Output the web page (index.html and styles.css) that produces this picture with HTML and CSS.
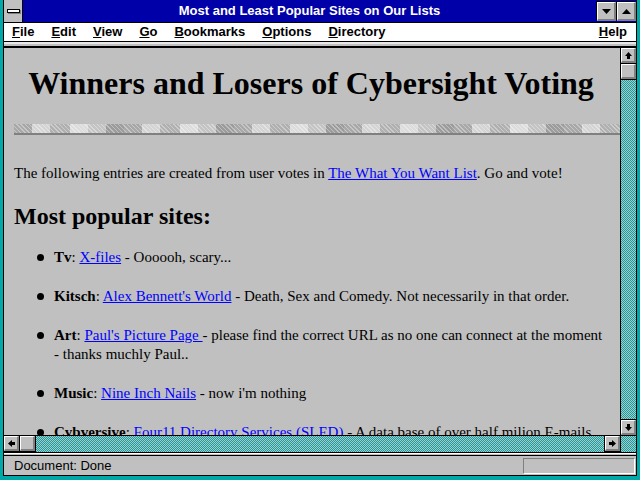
FILE: index.html
```html
<!DOCTYPE html>
<html lang="en">
<head>
  <meta charset="UTF-8">
  <title>Most and Least Popular Sites on Our Lists</title>
  <link rel="stylesheet" href="styles.css">
</head>
<body>
  <div class="window">
    <div class="frame">
      <div class="titlebar">
        <div class="sysmenu"><span class="sysbar"></span></div>
        <div class="caption">Most and Least Popular Sites on Our Lists</div>
        <div class="tbtn">
          <svg width="9" height="5" viewBox="0 0 9 5"><path d="M0 0h9L4.5 5z" fill="#000"/></svg>
        </div>
        <div class="tbtn">
          <svg width="9" height="5" viewBox="0 0 9 5"><path d="M0 5h9L4.5 0z" fill="#000"/></svg>
        </div>
      </div>

      <div class="menubar">
        <span class="mi"><u>F</u>ile</span>
        <span class="mi"><u>E</u>dit</span>
        <span class="mi"><u>V</u>iew</span>
        <span class="mi"><u>G</u>o</span>
        <span class="mi"><u>B</u>ookmarks</span>
        <span class="mi"><u>O</u>ptions</span>
        <span class="mi"><u>D</u>irectory</span>
        <span class="mi help"><u>H</u>elp</span>
      </div>
      <div class="splitter"></div>

      <div class="viewport">
        <div class="page">
          <h1>Winners and Losers of Cybersight Voting</h1>
          <div class="bar"></div>
          <p>The following entries are created from user votes in <a href="#">The What You Want List</a>. Go and vote!</p>
          <h2>Most popular sites:</h2>
          <ul>
            <li><b>Tv</b>: <a href="#">X-files</a> - Oooooh, scary...</li>
            <li><b>Kitsch</b>: <a href="#">Alex Bennett's World</a> - Death, Sex and Comedy. Not necessarily in that order.</li>
            <li><b>Art</b>: <a href="#">Paul's Picture Page </a> - please find the correct URL as no one can connect at the moment - thanks muchly Paul..</li>
            <li><b>Music</b>: <a href="#">Nine Inch Nails</a> - now i'm nothing</li>
            <li><b>Cybversive</b>: <a href="#">Four11 Directory Services (SLED)</a> - A data base of over half milion E-mails addresses</li>
          </ul>
        </div>
        <div class="vscroll">
          <div class="sbtn">
            <svg width="7" height="7" viewBox="0 0 7 7"><path d="M3.5 0L7 4H5v3H2V4H0z" fill="#000"/></svg>
          </div>
          <div class="thumb"></div>
          <div class="track"></div>
          <div class="sbtn">
            <svg width="7" height="7" viewBox="0 0 7 7"><path d="M3.5 7L7 3H5V0H2v3H0z" fill="#000"/></svg>
          </div>
        </div>
      </div>

      <div class="hrow">
        <div class="hscroll">
          <div class="sbtn">
            <svg width="7" height="7" viewBox="0 0 7 7"><path d="M0 3.5L4 0v2h3v3H4v2z" fill="#000"/></svg>
          </div>
          <div class="thumb"></div>
          <div class="track"></div>
          <div class="sbtn">
            <svg width="7" height="7" viewBox="0 0 7 7"><path d="M7 3.5L3 0v2H0v3h3v2z" fill="#000"/></svg>
          </div>
        </div>
        <div class="corner"></div>
      </div>
      <div class="divider"></div>

      <div class="status">
        <span class="msg">Document: Done</span>
        <div class="progress"></div>
      </div>
    </div>
  </div>
</body>
</html>
```

FILE: styles.css
```css
body {
    margin: 0;
}

.window {
    width: 640px;
    height: 480px;
    box-sizing: border-box;
    padding: 0 3px 4px 3px;
    background-color: #00a8a8;
}

.frame {
    height: 100%;
    box-sizing: border-box;
    border-left: 1px solid #000;
    border-right: 1px solid #000;
    border-bottom: 1px solid #000;
    display: flex;
    flex-direction: column;
    background-color: #c0c0c0;
    font-family: "Liberation Sans", Arial, sans-serif;
    font-size: 13px;
}

/* title bar */
.titlebar {
    height: 22px;
    flex: none;
    display: flex;
    border-bottom: 1px solid #000;
    background-color: #0000a8;
}
.sysmenu {
    width: 18px;
    background-color: #c0c0c0;
    border-right: 1px solid #000;
    display: flex;
    align-items: center;
    justify-content: center;
}
.sysbar {
    width: 11px;
    height: 2px;
    background-color: #fff;
    border: 1px solid #000;
    box-shadow: 1px 1px 0 #808080;
}
.caption {
    flex: 1;
    color: #fff;
    font-weight: bold;
    text-align: center;
    line-height: 22px;
}
.tbtn {
    width: 19px;
    height: 19px;
    margin-top: 2px;
    box-sizing: border-box;
    background-color: #c0c0c0;
    border-top: 1px solid #fff;
    border-left: 1px solid #fff;
    border-right: 2px solid #808080;
    border-bottom: 2px solid #808080;
    box-shadow: -1px -1px 0 #000;
    margin-left: 1px;
    display: flex;
    align-items: center;
    justify-content: center;
}

/* menu */
.menubar {
    height: 18px;
    flex: none;
    display: flex;
    gap: 17px;
    padding: 0 9px 0 8px;
    background-color: #fff;
    border-bottom: 1px solid #000;
    font-weight: bold;
    line-height: 18px;
}
.help {
    margin-left: auto;
}
.splitter {
    height: 6px;
    flex: none;
    box-sizing: border-box;
    border-top: 2px solid #e8e8e8;
    border-bottom: 2px solid #000;
    background-color: #c0c0c0;
}

/* document view */
.viewport {
    flex: 1;
    display: flex;
    min-height: 0;
}
.page {
    flex: 1;
    overflow: hidden;
    padding: 0 12px 0 10px;
    font-family: "Liberation Serif", "Times New Roman", serif;
    font-size: 15px;
    line-height: 19px;
    color: #000;
}
.page h1 {
    margin: 17px 0 0;
    font-size: 32px;
    line-height: 37px;
    text-align: center;
}
.page h2 {
    margin: 0;
    font-size: 24px;
    line-height: 28px;
}
.page p {
    margin: 29px 0 19px;
}
.page a {
    color: #0000ff;
}
.page ul {
    margin: 18px 0 0;
    padding-left: 40px;
    list-style: none;
}
.page li {
    margin-bottom: 20px;
}
.page li::before {
    content: "";
    display: inline-block;
    width: 7px;
    height: 7px;
    margin-left: -17px;
    margin-right: 10px;
    border-radius: 50%;
    background-color: #000;
    vertical-align: 1px;
}
.bar {
    height: 11px;
    margin: 22px -12px 0 0;
    background-color: #b4b4b4;
    background-image:
        linear-gradient(to bottom, transparent 9px, #808080 9px),
        repeating-linear-gradient(45deg, rgba(255,255,255,.35) 0 1px, transparent 1px 3px),
        repeating-linear-gradient(90deg, #a8a8a8 0 18px, #d4d4d4 18px 36px, #b0b0b0 36px 56px, #dcdcdc 56px 74px, #c4c4c4 74px 92px, #9c9c9c 92px 110px);
}

/* scroll bars */
.vscroll {
    width: 15px;
    border-left: 1px solid #000;
    display: flex;
    flex-direction: column;
}
.hrow {
    height: 16px;
    flex: none;
    display: flex;
    border-top: 1px solid #000;
}
.hscroll {
    flex: 1;
    display: flex;
}
.track,
.corner {
    flex: 1;
    background-color: #60b4b4;
    background-image: conic-gradient(#00a8a8 25%, #c0c0c0 0 50%, #00a8a8 0 75%, #c0c0c0 0);
    background-size: 2px 2px;
}
.corner {
    flex: none;
    width: 15px;
    border-left: 1px solid #000;
}
.sbtn,
.thumb {
    width: 15px;
    height: 15px;
    flex: none;
    box-sizing: border-box;
    background-color: #c0c0c0;
    border-top: 1px solid #fff;
    border-left: 1px solid #fff;
    border-right: 2px solid #808080;
    border-bottom: 2px solid #808080;
    display: flex;
    align-items: center;
    justify-content: center;
    box-shadow: 0 0 0 1px #000;
    position: relative;
}
.vscroll .sbtn,
.vscroll .thumb {
    margin-bottom: 1px;
}
.vscroll .sbtn:last-child {
    margin: 1px 0 0;
}
.hscroll .sbtn,
.hscroll .thumb {
    margin-right: 1px;
}
.hscroll .sbtn:last-child {
    margin: 0 0 0 1px;
}
.divider {
    height: 4px;
    flex: none;
    box-sizing: border-box;
    border-top: 1px solid #000;
    border-bottom: 1px solid #000;
    box-shadow: inset 0 1px 0 #fff;
}

/* status */
.status {
    height: 19px;
    flex: none;
    display: flex;
    align-items: center;
    padding: 0 1px 0 10px;
}
.msg {
    flex: 1;
}
.progress {
    width: 110px;
    height: 14px;
    border-top: 1px solid #808080;
    border-left: 1px solid #808080;
    border-right: 1px solid #fff;
    border-bottom: 1px solid #fff;
}
```
